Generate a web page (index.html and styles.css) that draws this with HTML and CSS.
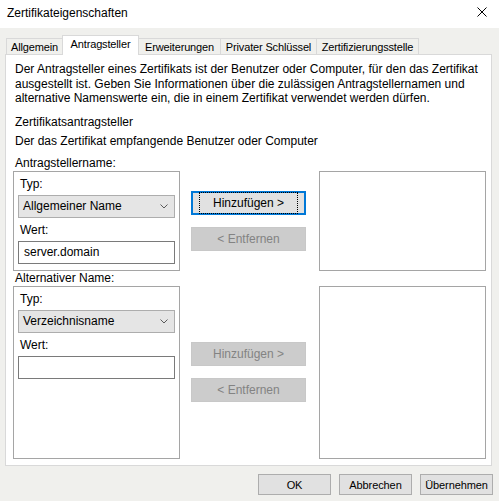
FILE: index.html
```html
<!DOCTYPE html>
<html lang="de">
<head>
<meta charset="utf-8">
<title>Zertifikateigenschaften</title>
<link rel="stylesheet" href="styles.css">
</head>
<body>
<div class="window">
  <div class="titlebar">
    <span class="title">Zertifikateigenschaften</span>
    <svg class="close" width="10" height="10" viewBox="0 0 10 10"><path d="M0.5 0.5 L9.5 9.5 M9.5 0.5 L0.5 9.5" stroke="#000" stroke-width="1" fill="none"/></svg>
  </div>
  <div class="client">
    <div class="tabs">
      <div class="tab t1">Allgemein</div>
      <div class="tab active t2">Antragsteller</div>
      <div class="tab t3">Erweiterungen</div>
      <div class="tab t4">Privater Schlüssel</div>
      <div class="tab t5">Zertifizierungsstelle</div>
    </div>
    <div class="panel">
      <p class="intro">Der Antragsteller eines Zertifikats ist der Benutzer oder Computer, für den das Zertifikat<br>ausgestellt ist. Geben Sie Informationen über die zulässigen Antragstellernamen und<br>alternative Namenswerte ein, die in einem Zertifikat verwendet werden dürfen.</p>
      <div class="heading">Zertifikatsantragsteller</div>
      <div class="sub">Der das Zertifikat empfangende Benutzer oder Computer</div>

      <div class="label first">Antragstellername:</div>
      <div class="row r1">
        <div class="group">
          <div class="flabel">Typ:</div>
          <div class="select"><span>Allgemeiner Name</span><svg class="chev" width="8" height="5" viewBox="0 0 8 5"><path d="M0.5 0.5 L4 4 L7.5 0.5" stroke="#5a5a5a" stroke-width="1" fill="none"/></svg></div>
          <div class="flabel wert">Wert:</div>
          <div class="input">server.domain</div>
        </div>
        <div class="buttons">
          <div class="btn focus"><span class="focusrect">Hinzufügen &gt;</span></div>
          <div class="btn disabled">&lt; Entfernen</div>
        </div>
        <div class="list"></div>
      </div>

      <div class="label">Alternativer Name:</div>
      <div class="row r2">
        <div class="group">
          <div class="flabel">Typ:</div>
          <div class="select"><span>Verzeichnisname</span><svg class="chev" width="8" height="5" viewBox="0 0 8 5"><path d="M0.5 0.5 L4 4 L7.5 0.5" stroke="#5a5a5a" stroke-width="1" fill="none"/></svg></div>
          <div class="flabel wert">Wert:</div>
          <div class="input"></div>
        </div>
        <div class="buttons">
          <div class="btn disabled">Hinzufügen &gt;</div>
          <div class="btn disabled">&lt; Entfernen</div>
        </div>
        <div class="list"></div>
      </div>
    </div>
    <div class="footer">
      <div class="dbtn">OK</div>
      <div class="dbtn">Abbrechen</div>
      <div class="dbtn">Übernehmen</div>
    </div>
  </div>
</div>
</body>
</html>
```

FILE: styles.css
```css
html, body {
  margin: 0;
  padding: 0;
}
body {
  width: 499px;
  height: 501px;
  overflow: hidden;
  background: #f0f0ed;
  font-family: "Liberation Sans", Arial, sans-serif;
  font-size: 12px;
  color: #000;
}
.window {
  width: 499px;
  height: 501px;
  display: flex;
  flex-direction: column;
}
.titlebar {
  height: 28px;
  background: #fff;
  display: flex;
  align-items: center;
  justify-content: space-between;
  padding: 0 10px 0 7px;
  box-sizing: border-box;
}
.title {
  line-height: 15px;
  margin-top: -2px;
}
.close {
  margin-top: -4px;
  margin-right: 2px;
}
.client {
  padding: 0 7px 0 5px;
  display: flex;
  flex-direction: column;
}
.tabs {
  margin-top: 7px;
  height: 19px;
  display: flex;
  align-items: flex-end;
  padding-left: 1px;
}
.tab {
  box-sizing: border-box;
  height: 16px;
  border: 1px solid #d9d9d9;
  border-bottom: none;
  background: #f0f0ed;
  margin-left: -1px;
  font-size: 11px;
  letter-spacing: -0.15px;
  line-height: 16px;
  text-align: center;
  white-space: nowrap;
}
.tab.t1 { margin-left: 0; width: 57px; }
.tab.t2 { width: 77px; }
.tab.t3 { width: 83px; }
.tab.t4 { width: 97px; }
.tab.t5 { width: 103px; }
.tab.active {
  height: 20px;
  background: #fff;
  margin-bottom: -1px;
  position: relative;
  z-index: 1;
  line-height: 17px;
}
.panel {
  box-sizing: border-box;
  height: 412px;
  background: #fff;
  border: 1px solid #d9d9d9;
  padding: 7px 5px 0 7px;
}
.intro {
  margin: 0 0 0 2px;
  line-height: 14.5px;
}
.heading {
  margin: 9px 0 0 2px;
  line-height: 14.5px;
}
.sub {
  margin: 4.5px 0 0 2px;
  line-height: 14.5px;
}
.label {
  margin-left: 2px;
  line-height: 15px;
}
.label.first {
  margin-top: 7.5px;
}
.row {
  display: flex;
  align-items: flex-start;
}
.r1 { height: 100px; }
.r2 { height: 173px; }
.group {
  box-sizing: border-box;
  width: 167px;
  height: 100%;
  border: 1px solid #a5a5a5;
  padding: 5px 4px 0 4px;
}
.flabel {
  line-height: 15px;
  margin-left: 2px;
}
.flabel.wert {
  margin-top: 5px;
}
.select {
  box-sizing: border-box;
  margin-top: 3px;
  height: 23px;
  background: #e5e5e5;
  border: 1px solid #adadad;
  display: flex;
  align-items: center;
  justify-content: space-between;
  padding: 0 6px 0 4px;
}
.chev {
  display: block;
}
.input {
  box-sizing: border-box;
  margin-top: 3px;
  height: 23px;
  border: 1px solid #7a7a7a;
  background: #fff;
  padding: 0 5px;
  line-height: 21px;
}
.buttons {
  width: 115px;
  margin: 0 13px 0 11px;
  display: flex;
  flex-direction: column;
  gap: 12px;
}
.r1 .buttons { padding-top: 20px; }
.r2 .buttons { padding-top: 56px; }
.btn {
  box-sizing: border-box;
  height: 24px;
  display: flex;
  align-items: center;
  justify-content: center;
  background: #e1e1e1;
  border: 1px solid #adadad;
}
.btn.focus {
  border: 2px solid #0078d7;
}
.focusrect {
  outline: 1px dotted #000;
  outline-offset: 0;
  padding: 2px 13px;
  line-height: 16px;
}
.btn.disabled {
  background: #cccccc;
  border-color: #c8c8c8;
  color: #838383;
}
.list {
  box-sizing: border-box;
  width: 167px;
  height: 100%;
  border: 1px solid #a5a5a5;
  background: #fff;
}
.footer {
  margin-top: 8px;
  margin-right: -1px;
  display: flex;
  justify-content: flex-end;
  gap: 8px;
}
.dbtn {
  box-sizing: border-box;
  width: 73px;
  height: 21px;
  background: #e1e1e1;
  border: 1px solid #adadad;
  display: flex;
  align-items: center;
  justify-content: center;
  font-size: 11px;
  letter-spacing: -0.1px;
}
```
